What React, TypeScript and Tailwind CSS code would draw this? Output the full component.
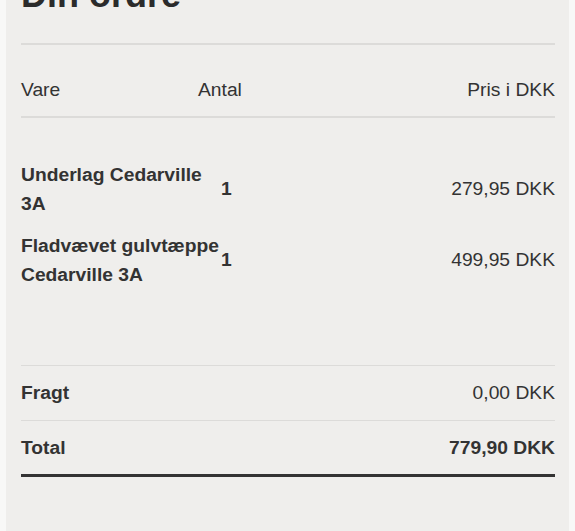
const items = [
  { name: 'Underlag Cedarville 3A', qty: 1, price: '279,95 DKK' },
  { name: 'Fladvævet gulvtæppe Cedarville 3A', qty: 1, price: '499,95 DKK' },
];

export default function App() {
  return (
    <div className="h-[531px] overflow-hidden bg-[#f8f8f7] px-[6px] font-['Liberation_Sans',Arial,sans-serif] text-[#333]">
      <div className="flow-root h-full bg-[#efeeec] pl-[15px] pr-[14px]">
        <h1 className="-mt-[23px] text-[36px] font-bold leading-[36px] text-[#2b2b2b]">Din ordre</h1>

        <div className="mt-[30px] h-[2px] bg-[#dcdbd9]" />

        <div className="flex items-center pt-[34px] pb-[15px] text-[19.25px] leading-[22px]">
          <span className="w-[177px]">Vare</span>
          <span className="flex-1">Antal</span>
          <span>Pris i DKK</span>
        </div>

        <div className="h-[2px] bg-[#dcdbd9]" />

        <div className="flex flex-col gap-[13px] pt-[42px] pb-[76px]">
          {items.map(item => (
            <div key={item.name} className="flex items-center text-[19.25px]">
              <span className="w-[200px] font-bold leading-[29px]">{item.name}</span>
              <span className="flex-1 font-bold leading-[22px]">{item.qty}</span>
              <span className="leading-[22px]">{item.price}</span>
            </div>
          ))}
        </div>

        <div className="h-[1px] bg-[#dcdbd9]" />

        <div className="flex items-center justify-between py-[16px] text-[19.25px] leading-[22px]">
          <span className="font-bold">Fragt</span>
          <span>0,00 DKK</span>
        </div>

        <div className="h-[1px] bg-[#dcdbd9]" />

        <div className="flex items-center justify-between pt-[16px] pb-[15px] text-[19.25px] font-bold leading-[22px]">
          <span>Total</span>
          <span>779,90 DKK</span>
        </div>

        <div className="h-[3px] bg-[#333]" />
      </div>
    </div>
  );
}
